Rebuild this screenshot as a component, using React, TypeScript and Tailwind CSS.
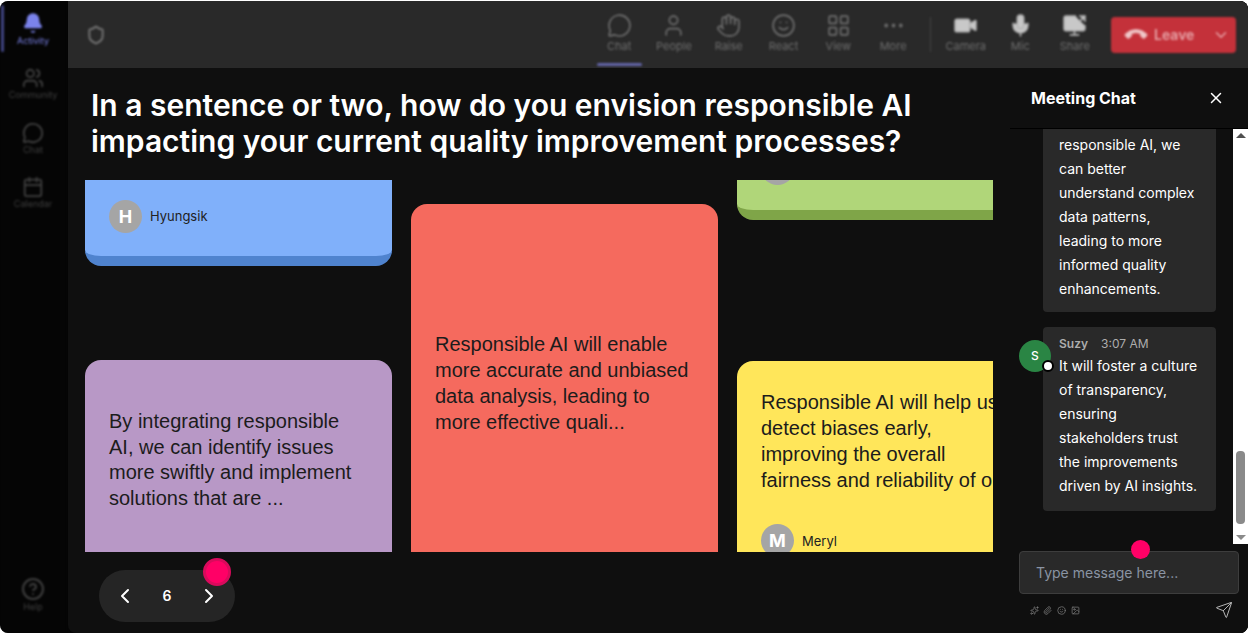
import { Bell, Calendar, ChevronDown, ChevronLeft, ChevronRight, CircleHelp, Ellipsis, Hand, LayoutGrid, MessageCircle, Mic, Paperclip, Phone, ScreenShare, Send, Shield, Smile, Sparkles, User, Users, Video, X, Image } from 'lucide-react';

const railItems = [
  { label: 'Community', Icon: Users },
  { label: 'Chat', Icon: MessageCircle },
  { label: 'Calendar', Icon: Calendar },
];

const barItems = [
  { label: 'Chat', Icon: MessageCircle, active: true },
  { label: 'People', Icon: User },
  { label: 'Raise', Icon: Hand },
  { label: 'React', Icon: Smile },
  { label: 'View', Icon: LayoutGrid },
  { label: 'More', Icon: Ellipsis },
];

const mediaItems = [
  { label: 'Camera', Icon: Video },
  { label: 'Mic', Icon: Mic },
  { label: 'Share', Icon: ScreenShare },
];

function Rail() {
  return (
    <aside className="w-[66px] shrink-0 bg-[#050505] rounded-l-lg flex flex-col items-center blur-[1px]">
      <div className="w-full relative flex flex-col items-center pt-[11px] h-[53px] text-[#7b83eb]">
        <div className="absolute left-[1px] top-[4px] w-[3px] h-[47px] bg-[#3f4380] rounded" />
        <Bell size={22} fill="#7b83eb" strokeWidth={1.5} />
        <span className="text-[9px] leading-[12px] mt-[1px]">Activity</span>
      </div>
      {railItems.map(({ label, Icon }) => (
        <div key={label} className="h-[54.5px] flex flex-col items-center pt-[13px] text-[#3f3f3f]">
          <Icon size={22} strokeWidth={2} />
          <span className="text-[9px] leading-[12px]">{label}</span>
        </div>
      ))}
      <div className="mt-auto mb-[20px] flex flex-col items-center text-[#3f3f3f]">
        <CircleHelp size={24} strokeWidth={2} />
        <span className="text-[9px] leading-[12px]">Help</span>
      </div>
    </aside>
  );
}

function TopBar() {
  return (
    <header className="h-[67px] shrink-0 bg-[#292929] rounded-tr-lg flex items-center pl-[18px] pr-[12px]">
      <Shield size={20} className="text-[#6e6e6e] blur-[1px]" strokeWidth={2.5} />
      <div className="ml-auto flex items-center h-full blur-[1px]">
        {barItems.map(({ label, Icon, active }) => (
          <div key={label} className="w-[54.8px] h-full relative flex flex-col items-center pt-[12px] text-[#6e6e6e]">
            <Icon size={25} strokeWidth={1.6} />
            <span className="text-[11px] leading-[14px] mt-[1px]">{label}</span>
            {active && <div className="absolute bottom-[2px] left-[5px] w-[45px] h-[3px] rounded bg-[#6264a7]" />}
          </div>
        ))}
        <div className="w-px h-[35px] bg-[#444] mx-[8px] ml-[9px] mr-[8px]" />
        {mediaItems.map(({ label, Icon }) => (
          <div key={label} className="w-[54.5px] h-full flex flex-col items-center pt-[12px] text-[#b5b5b5]">
            <Icon size={25} fill="#c8c8c8" strokeWidth={1.6} />
            <span className="text-[11px] leading-[14px] mt-[1px] text-[#6e6e6e]">{label}</span>
          </div>
        ))}
        <div className="ml-[9px] w-[125px] h-[36px] rounded bg-[#c4313a] flex items-center pl-[15px] pr-[6px] text-[#e7a5a9]">
          <Phone size={20} fill="#f0c8ca" className="rotate-[135deg]" strokeWidth={1} />
          <span className="ml-[8px] text-sm font-semibold">Leave</span>
          <ChevronDown size={18} className="ml-auto" />
        </div>
      </div>
    </header>
  );
}

function Avatar({ letter, name }: { letter: string; name: string }) {
  return (
    <div className="flex items-center gap-[8px]">
      <div className="w-[33px] h-[33px] rounded-full bg-[#a5a5a5] text-white font-bold text-lg flex items-center justify-center">{letter}</div>
      <span className="text-[13px] text-[#222]">{name}</span>
    </div>
  );
}

function Board() {
  return (
    <div className="flex-1 min-h-0 mx-[17px] overflow-hidden flex gap-[19px] font-['Liberation_Sans',sans-serif]">
      <div className="w-[307px] shrink-0 flex flex-col">
        <div className="h-[86px] shrink-0 bg-[#80b0fa] rounded-b-2xl border-b-[10px] border-[#4f83ce] pl-[24px] pt-[20px] font-['Inter',sans-serif]">
          <Avatar letter="H" name="Hyungsik" />
        </div>
        <div className="mt-[94px] h-[300px] shrink-0 bg-[#b898c6] rounded-2xl px-[24px] pt-[49px] text-[20px] leading-[25.6px] text-[#1c1c1c]">
          By integrating responsible AI, we can identify issues more swiftly and implement solutions that are ...
        </div>
      </div>
      <div className="w-[307px] shrink-0 pt-[24px]">
        <div className="h-[400px] bg-[#f56a5e] rounded-2xl px-[24px] pt-[127px] text-[20px] leading-[26px] text-[#1c1c1c]">
          Responsible AI will enable more accurate and unbiased data analysis, leading to more effective quali...
        </div>
      </div>
      <div className="w-[307px] shrink-0 flex flex-col">
        <div className="h-[40px] shrink-0 bg-[#b0d679] rounded-b-2xl border-b-[10px] border-[#7fa548] pl-[24px] relative overflow-hidden">
          <div className="absolute left-[24px] top-[-28px] w-[33px] h-[33px] rounded-full bg-[#a5a5a5]" />
        </div>
        <div className="mt-[141px] h-[300px] shrink-0 bg-[#ffe65a] rounded-2xl pl-[24px] pt-[28px] text-[20px] leading-[26px] text-[#1c1c1c]">
          <p className="w-[243px] whitespace-nowrap">
            Responsible AI will help us<br />detect biases early,<br />improving the overall<br />fairness and reliability of o...
          </p>
          <div className="mt-[31px] font-['Inter',sans-serif]">
            <Avatar letter="M" name="Meryl" />
          </div>
        </div>
      </div>
    </div>
  );
}

function Pager() {
  return (
    <div className="h-[81px] shrink-0 pl-[31px] pt-[18px]">
      <div className="relative w-[136px] h-[52px] rounded-full bg-[#252525] flex items-center justify-between px-[14px] text-white">
        <ChevronLeft size={24} strokeWidth={2} />
        <span className="text-sm font-semibold">6</span>
        <ChevronRight size={24} strokeWidth={2} />
        <div className="absolute right-[4px] top-[-12px] w-[28px] h-[28px] rounded-full bg-[#ff0066] border-[3px] border-[#d90a5c]" />
      </div>
    </div>
  );
}

function Bubble({ lines }: { lines: string[] }) {
  return (
    <div className="text-sm leading-[24px] text-white">
      {lines.map((line) => (
        <div key={line} className="whitespace-nowrap">{line}</div>
      ))}
    </div>
  );
}

function ChatPanel() {
  return (
    <aside className="w-[238px] shrink-0 bg-[#0f0f0f] flex flex-col rounded-br-lg">
      <div className="h-[61px] shrink-0 border-b border-[#000] flex items-center justify-between pl-[21px] pr-[23px]">
        <span className="text-base font-bold text-white">Meeting Chat</span>
        <X size={18} className="text-white" />
      </div>
      <div className="h-[415px] shrink-0 flex overflow-hidden">
        <div className="flex-1 pl-[33px] pr-[17px] overflow-hidden">
          <div className="w-[173px] h-[183px] bg-[#292929] rounded-b pl-[16px] pt-[4px]">
            <Bubble lines={['responsible AI, we', 'can better', 'understand complex', 'data patterns,', 'leading to more', 'informed quality', 'enhancements.']} />
          </div>
          <div className="relative mt-[15px] w-[173px] h-[184px] bg-[#292929] rounded pl-[16px] pt-[7px]">
            <div className="absolute left-[-24px] top-[13px] w-[32px] h-[32px] rounded-full bg-[#2a8544] text-white text-xs font-medium flex items-center justify-center">S</div>
            <div className="absolute left-[-1px] top-[33px] w-[12px] h-[12px] rounded-full bg-white border-2 border-black" />
            <div className="flex items-center text-xs leading-[20px] text-[#adadad]">
              <span className="font-semibold">Suzy</span>
              <span className="ml-[13px]">3:07 AM</span>
            </div>
            <Bubble lines={['It will foster a culture', 'of transparency,', 'ensuring', 'stakeholders trust', 'the improvements', 'driven by AI insights.']} />
          </div>
        </div>
        <div className="w-[15px] shrink-0 bg-white flex flex-col items-center justify-between py-[4px] relative">
          <div className="w-0 h-0 border-x-[5px] border-x-transparent border-b-[5px] border-b-[#505050]" />
          <div className="absolute top-[322px] left-[3px] w-[9px] h-[73px] rounded bg-[#8a8a8a]" />
          <div className="w-0 h-0 border-x-[5px] border-x-transparent border-t-[5px] border-t-[#8a8a8a]" />
        </div>
      </div>
      <div className="relative flex-1 pl-[9px] pr-[9px] pt-[7px]">
        <div className="absolute left-[121px] top-[-4px] w-[19px] h-[19px] rounded-full bg-[#ff0066]" />
        <div className="h-[43px] rounded bg-[#292929] border border-[#3d3d3d] pl-[16px] flex items-center text-sm text-[#8a94a3]">Type message here...</div>
        <div className="flex items-center mt-[7px] pl-[11px] pr-[6px] text-[#7a7a7a]">
          <Sparkles size={9} />
          <Paperclip size={9} className="ml-[4px]" />
          <Smile size={9} className="ml-[5px]" />
          <Image size={9} className="ml-[5px]" />
          <Send size={18} strokeWidth={1.2} className="ml-auto text-[#c8c8c8]" />
        </div>
      </div>
    </aside>
  );
}

export default function App() {
  return (
    <div className="w-[1248px] h-[634px] bg-white overflow-hidden font-['Inter',sans-serif]">
      <div className="w-full h-full pt-px pb-px">
        <div className="w-full h-full flex bg-[#050505] rounded-lg overflow-hidden">
          <Rail />
          <div className="flex-1 min-w-0 flex flex-col pl-[2px] bg-[#050505]">
            <TopBar />
            <div className="flex-1 min-h-0 flex bg-[#0f0f0f] rounded-bl-lg pr-0">
              <main className="flex-1 min-w-0 flex flex-col">
                <h1 className="h-[112px] shrink-0 pl-[23px] pt-[19px] text-[30px] leading-[36px] font-semibold text-white">
                  In a sentence or two, how do you envision responsible AI
                  <br />
                  impacting your current quality improvement processes?
                </h1>
                <Board />
                <Pager />
              </main>
              <ChatPanel />
            </div>
          </div>
        </div>
      </div>
    </div>
  );
}
